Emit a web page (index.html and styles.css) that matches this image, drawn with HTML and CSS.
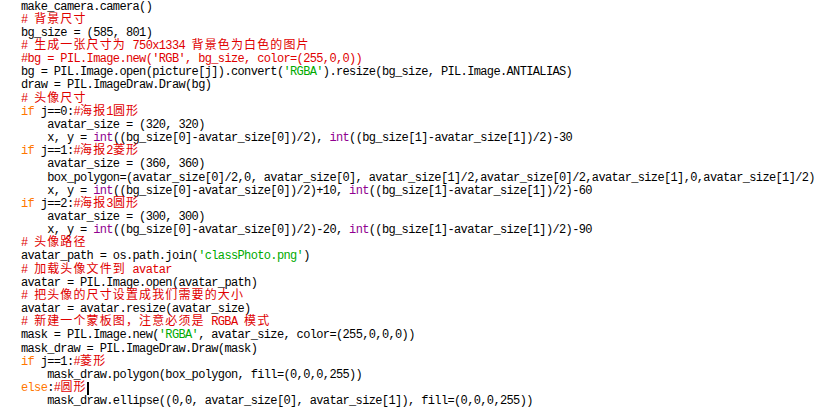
FILE: index.html
```html
<!DOCTYPE html>
<html lang="zh-CN">
<head>
<meta charset="utf-8">
<title>make_camera</title>
<link rel="stylesheet" href="styles.css">
</head>
<body>
<div class="code">
<div class="ln">make_camera.camera()</div>
<div class="ln"><span class="c"># <span class="z">背景尺寸</span></span></div>
<div class="ln">bg_size = (585, 801)</div>
<div class="ln"><span class="c"># <span class="z">生成一张尺寸为</span> 750x1334 <span class="z">背景色为白色的图片</span></span></div>
<div class="ln"><span class="c">#bg = PIL.Image.new('RGB', bg_size, color=(255,0,0))</span></div>
<div class="ln">bg = PIL.Image.open(picture[j]).convert(<span class="s">'RGBA'</span>).resize(bg_size, PIL.Image.ANTIALIAS)</div>
<div class="ln">draw = PIL.ImageDraw.Draw(bg)</div>
<div class="ln"><span class="c"># <span class="z">头像尺寸</span></span></div>
<div class="ln"><span class="k">if</span> j==0:<span class="c">#<span class="z">海报</span>1<span class="z">圆形</span></span></div>
<div class="ln">    avatar_size = (320, 320)</div>
<div class="ln">    x, y = <span class="b">int</span>((bg_size[0]-avatar_size[0])/2), <span class="b">int</span>((bg_size[1]-avatar_size[1])/2)-30</div>
<div class="ln"><span class="k">if</span> j==1:<span class="c">#<span class="z">海报</span>2<span class="z">菱形</span></span></div>
<div class="ln">    avatar_size = (360, 360)</div>
<div class="ln">    box_polygon=(avatar_size[0]/2,0, avatar_size[0], avatar_size[1]/2,avatar_size[0]/2,avatar_size[1],0,avatar_size[1]/2)</div>
<div class="ln">    x, y = <span class="b">int</span>((bg_size[0]-avatar_size[0])/2)+10, <span class="b">int</span>((bg_size[1]-avatar_size[1])/2)-60</div>
<div class="ln"><span class="k">if</span> j==2:<span class="c">#<span class="z">海报</span>3<span class="z">圆形</span></span></div>
<div class="ln">    avatar_size = (300, 300)</div>
<div class="ln">    x, y = <span class="b">int</span>((bg_size[0]-avatar_size[0])/2)-20, <span class="b">int</span>((bg_size[1]-avatar_size[1])/2)-90</div>
<div class="ln"><span class="c"># <span class="z">头像路径</span></span></div>
<div class="ln">avatar_path = os.path.join(<span class="s">'classPhoto.png'</span>)</div>
<div class="ln"><span class="c"># <span class="z">加载头像文件到</span> avatar</span></div>
<div class="ln">avatar = PIL.Image.open(avatar_path)</div>
<div class="ln"><span class="c"># <span class="z">把头像的尺寸设置成我们需要的大小</span></span></div>
<div class="ln">avatar = avatar.resize(avatar_size)</div>
<div class="ln"><span class="c"># <span class="z">新建一个蒙板图，注意必须是</span> RGBA <span class="z">模式</span></span></div>
<div class="ln">mask = PIL.Image.new(<span class="s">'RGBA'</span>, avatar_size, color=(255,0,0,0))</div>
<div class="ln">mask_draw = PIL.ImageDraw.Draw(mask)</div>
<div class="ln"><span class="k">if</span> j==1:<span class="c">#<span class="z">菱形</span></span></div>
<div class="ln">    mask_draw.polygon(box_polygon, fill=(0,0,0,255))</div>
<div class="ln"><span class="k">else</span>:<span class="c">#<span class="z">圆形</span></span><span class="cursor"></span></div>
<div class="ln">    mask_draw.ellipse((0,0, avatar_size[0], avatar_size[1]), fill=(0,0,0,255))</div>
</div>
</body>
</html>
```

FILE: styles.css
```css
html, body {
  margin: 0;
  padding: 0;
  background: #ffffff;
}

.code {
  padding: 0.5px 0 0 21px;
  font-family: "Liberation Mono", "Courier New", monospace;
  font-size: 12px;
  letter-spacing: -0.64px;
  color: #000000;
}

.ln {
  height: 13.16px;
  line-height: 13px;
  white-space: pre;
}

.z {
  font-family: "Noto Sans CJK SC", sans-serif;
  font-size: 12px;
  letter-spacing: 1.12px;
  line-height: 0;
}

.c { color: #e00000; }
.k { color: #ff7700; }
.b { color: #900090; }
.s { color: #00aa00; }

.cursor {
  display: inline-block;
  width: 2px;
  height: 13px;
  background: #000000;
  vertical-align: top;
}
```
